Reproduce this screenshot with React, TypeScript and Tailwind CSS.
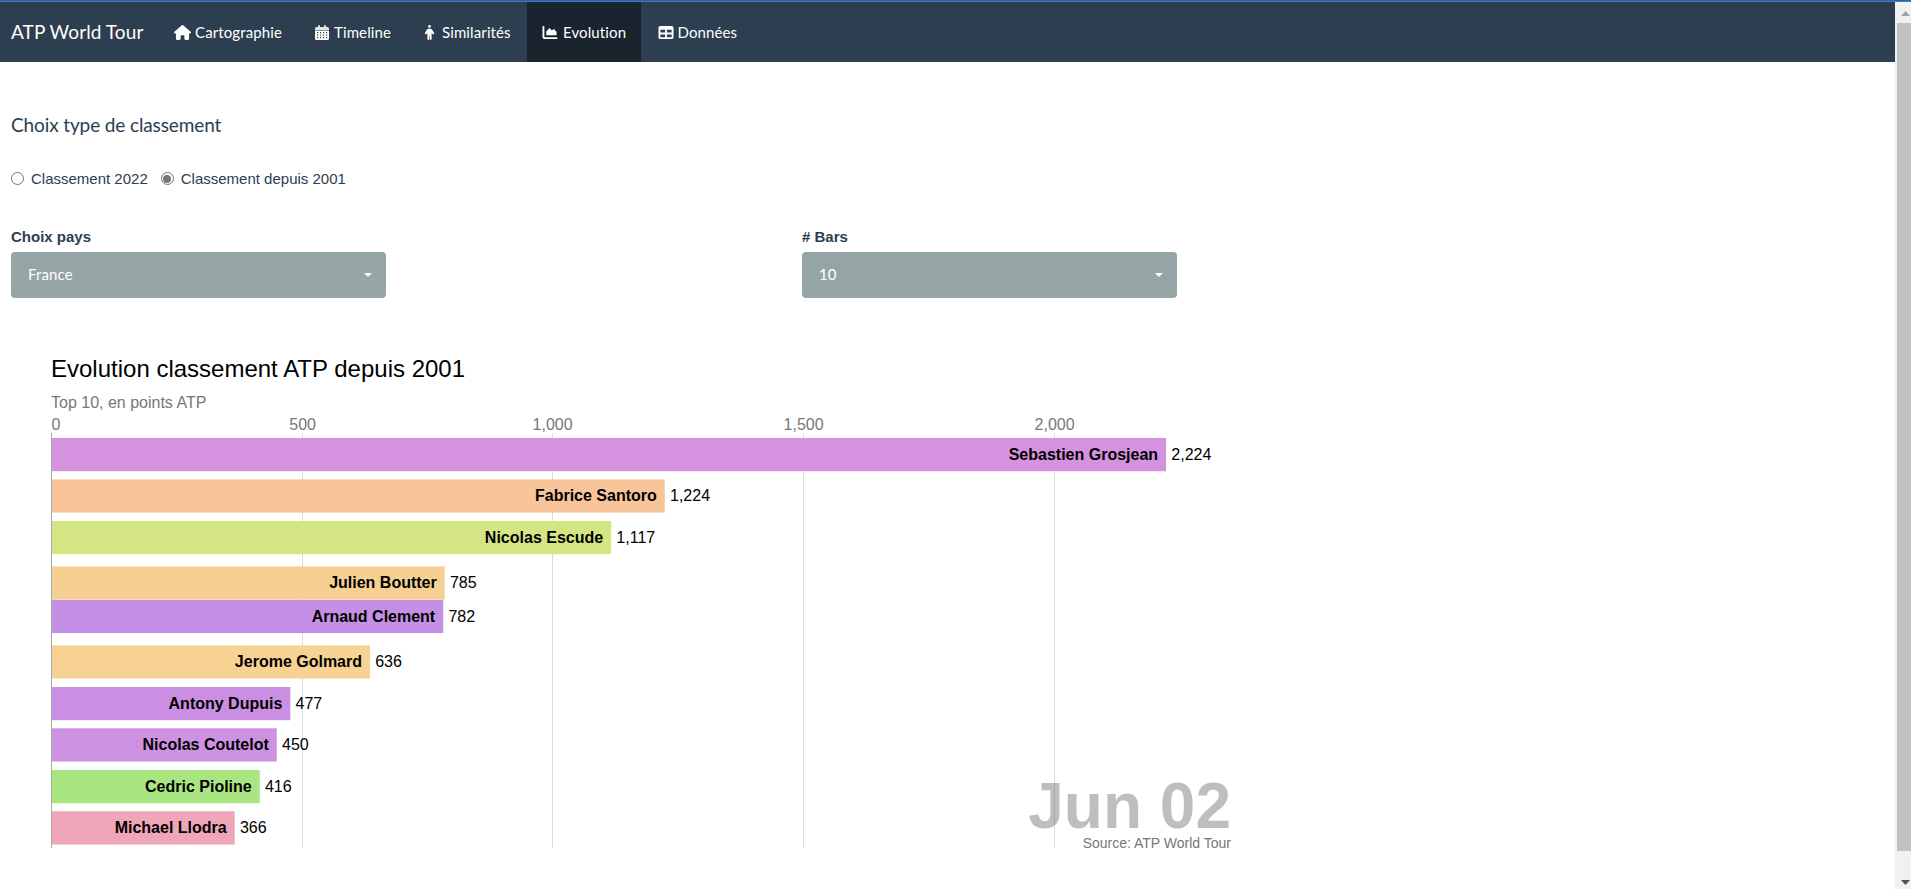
import { FaChartArea, FaHouse, FaPerson, FaTable } from "react-icons/fa6";

function CalendarIcon({ className }: { className?: string }) {
  return (
    <svg viewBox="0 0 14 15" className={className}>
      <path d="M3 1a1 1 0 0 1 2 0v1h4V1a1 1 0 0 1 2 0v1h1.500a1.500 1.500 0 0 1 1.500 1.500V5.500H0V3.500A1.500 1.500 0 0 1 1.500 2H3Z" fill="#e3e6e9" />
      <path d="M0 6h14v7.500a1.500 1.500 0 0 1-1.500 1.500h-11A1.500 1.500 0 0 1 0 13.500Z" fill="#fff" />
      {[7, 9.5, 12].map((y) =>
        [2, 5, 8, 11].map((x) => <rect key={`${x}-${y}`} x={x} y={y} width="1.200" height="1.200" fill="#2c3e50" />),
      )}
    </svg>
  );
}

const nav = [
  { label: "Cartographie", Icon: FaHouse, cls: "w-[141px] gap-1 pl-[15px]", icon: "w-[17px]" },
  { label: "Timeline", Icon: CalendarIcon, cls: "w-[108px] gap-[5px] pl-[15px]", icon: "w-[14px]" },
  { label: "Similarités", Icon: FaPerson, cls: "w-[119px] gap-[5px] pl-[14px]", icon: "w-[15px]" },
  { label: "Evolution", Icon: FaChartArea, cls: "w-[114px] gap-[5px] bg-[#1a242f] pl-[15px]", icon: "w-[16px]" },
  { label: "Données", Icon: FaTable, cls: "w-[120px] gap-1 pl-[16.5px]", icon: "w-[16px]" },
];

const X0 = 51.2;
const SCALE = 0.5013;

const bars = [
  { name: "Sebastien Grosjean", value: 2224, y: 438, color: "#d592df" },
  { name: "Fabrice Santoro", value: 1224, y: 479.4, color: "#f8c499" },
  { name: "Nicolas Escude", value: 1117, y: 521, color: "#d5e584" },
  { name: "Julien Boutter", value: 785, y: 566.4, color: "#f6cf92" },
  { name: "Arnaud Clement", value: 782, y: 599.9, color: "#c48fe4" },
  { name: "Jerome Golmard", value: 636, y: 645.3, color: "#f8d292" },
  { name: "Antony Dupuis", value: 477, y: 687, color: "#ca8fe2" },
  { name: "Nicolas Coutelot", value: 450, y: 728.3, color: "#ce92e2" },
  { name: "Cedric Pioline", value: 416, y: 770, color: "#a9e581" },
  { name: "Michael Llodra", value: 366, y: 811.3, color: "#efa6b8" },
];

const ticks = [
  { v: 0, x: 51 },
  { v: 500, x: 302 },
  { v: 1000, x: 552 },
  { v: 1500, x: 803 },
  { v: 2000, x: 1054 },
];

const fmt = (n: number) => n.toLocaleString("en-US");

function Radio({ label, checked }: { label: string; checked?: boolean }) {
  return (
    <label className="flex items-center gap-[7px]">
      <span className="flex size-[13px] items-center justify-center rounded-full border border-[#767676] bg-white">
        {checked && <span className="size-[8px] rounded-full bg-[#767676]" />}
      </span>
      <span className="pt-px">{label}</span>
    </label>
  );
}

function Picker({ label, value }: { label: string; value: string }) {
  return (
    <div className="w-[791px]">
      <div className="h-[27px] font-['Liberation_Sans',sans-serif] text-[15px] leading-[23px] font-bold">{label}</div>
      <button className="flex h-[46px] w-[375px] items-center justify-between rounded-[4px] bg-[#95a5a6] pr-[14px] pl-[17px] text-[15px] tracking-[0.15px] text-white">
        <span className="-mt-px">{value}</span>
        <span className="border-x-4 border-t-4 border-x-transparent border-t-white" />
      </button>
    </div>
  );
}

function BarChart() {
  return (
    <svg width="1260" height="520" viewBox="0 340 1260 520" className="block font-['Liberation_Sans',sans-serif]">
      <text x="51" y="377" fontSize="24">Evolution classement ATP depuis 2001</text>
      <text x="51" y="408" fontSize="16" fill="#777">Top 10, en points ATP</text>
      {ticks.map((t) => (
        <g key={t.v}>
          <rect x={t.x} y="433" width="1" height="415" fill={t.v ? "#dcdcdc" : "#a8a8a8"} />
          <text x={t.v ? t.x + 0.6 : 51.5} y="430" fontSize="16" fill="#777" textAnchor={t.v ? "middle" : "start"}>
            {fmt(t.v)}
          </text>
        </g>
      ))}
      {bars.map((b) => {
        const end = X0 + b.value * SCALE;
        return (
          <g key={b.name}>
            <rect x="52" y={b.y} width={end - 52} height="33.2" fill={b.color} />
            <text x={end - 8} y={b.y + 22} fontSize="16" fontWeight="700" textAnchor="end">{b.name}</text>
            <text x={end + 5.2} y={b.y + 22} fontSize="16">{fmt(b.value)}</text>
          </g>
        );
      })}
      <text x="1231" y="828" fontSize="64" fontWeight="700" textAnchor="end" opacity="0.25">Jun 02</text>
      <text x="1231" y="848" fontSize="14" fill="#777" textAnchor="end">Source: ATP World Tour</text>
    </svg>
  );
}

export default function App() {
  return (
    <div className="flex h-[889px] flex-col overflow-hidden bg-white font-['Lato',sans-serif] text-[#2c3e50]">
      <div className="h-[2px] shrink-0 border-b border-[#4d7ab8] bg-[#2c5fa5]" />
      <div className="flex min-h-0 flex-1">
        <div className="min-w-0 flex-1">
          <nav className="flex h-[60px] bg-[#2c3e50] text-white">
            <div className="flex w-[159px] items-center pl-[11px] text-[19px] tracking-[0.09px]">ATP World Tour</div>
            {nav.map(({ label, Icon, cls, icon }) => (
              <a key={label} className={`flex items-center text-[15px] tracking-[0.12px] whitespace-nowrap ${cls}`}>
                <Icon className={`h-[15px] shrink-0 ${icon}`} />
                {label}
              </a>
            ))}
          </nav>
          <main>
            <h4 className="mt-[52px] ml-[11px] text-[19px] leading-[21px] tracking-[-0.12px]">Choix type de classement</h4>
            <div className="mt-[33px] ml-[11px] flex h-[21px] gap-[13px] font-['Liberation_Sans',sans-serif] text-[15px]">
              <Radio label="Classement 2022" />
              <Radio label="Classement depuis 2001" checked />
            </div>
            <div className="mt-[36px] ml-[11px] flex">
              <Picker label="Choix pays" value="France" />
              <Picker label="# Bars" value="10" />
            </div>
            <div className="mt-[42px]">
              <BarChart />
            </div>
          </main>
        </div>
        <aside className="flex w-[16px] flex-col justify-between bg-[#f1f1f1] pl-[2px]">
          <svg className="block h-[21px] w-[14px]" viewBox="0 0 14 21">
            <path d="M4 14L8.5 9L13 14Z" fill="#a3a3a3" />
          </svg>
          <div className="flex-1 bg-[#c1c1c1]" />
          <svg className="block h-[38px] w-[14px]" viewBox="0 0 14 38">
            <path d="M4 29L8.5 34L13 29Z" fill="#505050" />
          </svg>
        </aside>
      </div>
    </div>
  );
}
